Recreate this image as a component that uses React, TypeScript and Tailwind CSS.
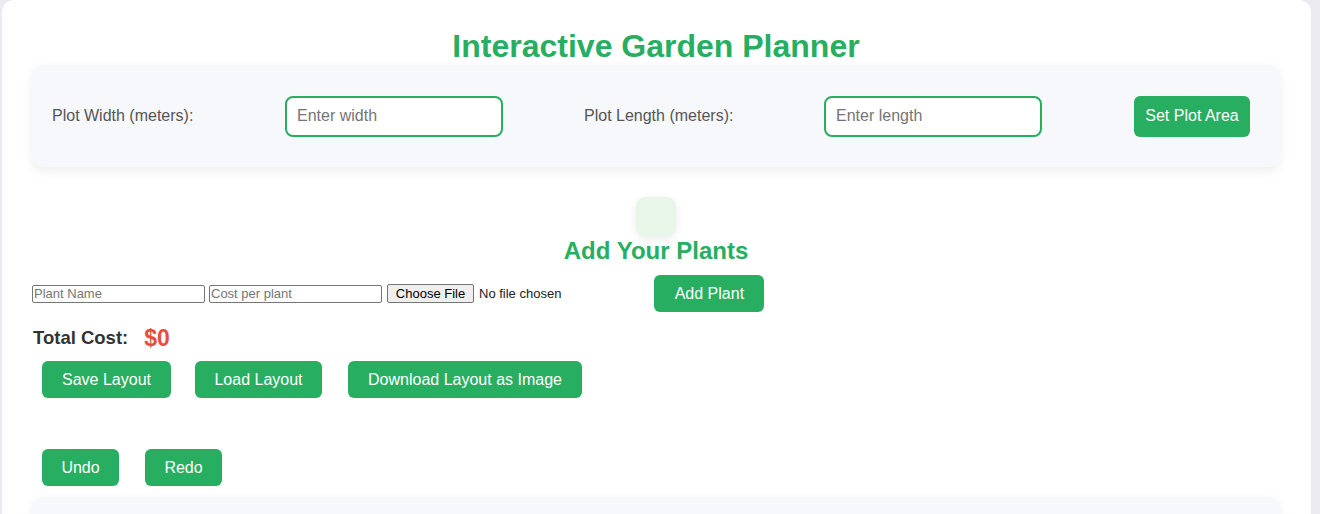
const font = { fontFamily: '"Liberation Sans", Arial, sans-serif' };

const GreenButton = ({ label, className = "" }: { label: string; className?: string }) => (
  <button
    className={`h-[37px] whitespace-nowrap rounded-[6px] bg-[#27ae60] text-center text-[16px] text-white ${className}`}
  >
    {label}
  </button>
);

export default function App() {
  return (
    <div className="min-h-[514px] overflow-hidden bg-[#ebeaf0]" style={font}>
      <div className="ml-[2px] min-h-[514px] w-[1309px] rounded-t-[12px] bg-white pl-[30px] pr-[31px]">
        <h1 className="pt-[28px] text-center text-[32px] font-bold leading-[37px] text-[#27ae60]">
          Interactive Garden Planner
        </h1>

        <div className="flex h-[102px] items-center rounded-[10px] bg-[#f7f8fc] pl-[20px] shadow-[0_4px_12px_rgba(0,0,0,0.07)]">
          <label className="w-[233px] text-[16px] text-[#555]">Plot Width (meters):</label>
          <input
            placeholder="Enter width"
            className="h-[41px] w-[218px] rounded-[8px] border-2 border-[#27ae60] bg-white px-[10px] text-[16px] outline-none placeholder:text-[#757575]"
          />
          <label className="ml-[81px] w-[240px] text-[16px] text-[#555]">Plot Length (meters):</label>
          <input
            placeholder="Enter length"
            className="h-[41px] w-[218px] rounded-[8px] border-2 border-[#27ae60] bg-white px-[10px] text-[16px] outline-none placeholder:text-[#757575]"
          />
          <button className="ml-[92px] h-[41px] w-[116px] rounded-[6px] bg-[#27ae60] text-[16px] text-white">
            Set Plot Area
          </button>
        </div>

        <div className="mx-auto mt-[30px] h-[40px] w-[40px] rounded-[10px] bg-[#e8f5e9] shadow-[0_2px_10px_rgba(0,0,0,0.08)]" />

        <h2 className="text-center text-[24px] font-bold leading-[28px] text-[#27ae60]">Add Your Plants</h2>

        <div className="mt-[10px] flex h-[37px] items-center">
          <input
            placeholder="Plant Name"
            className="h-[18px] w-[173px] rounded-[2px] border border-[#767676] px-[1px] text-[13px] placeholder:text-[#757575]"
          />
          <input
            placeholder="Cost per plant"
            className="ml-[4px] h-[18px] w-[173px] rounded-[2px] border border-[#767676] px-[1px] text-[13px] placeholder:text-[#757575]"
          />
          <button className="ml-[5px] h-[19px] w-[87px] rounded-[2px] border border-[#767676] bg-[#efefef] text-[13px] leading-none text-black">
            Choose File
          </button>
          <span className="ml-[5px] text-[13px] text-[#222]">No file chosen</span>
          <GreenButton label="Add Plant" className="ml-[93px] w-[110px]" />
        </div>

        <div className="mt-[12px] flex h-[28px] items-center pl-[1px]">
          <span className="text-[18.5px] font-bold text-[#333]">Total Cost:</span>
          <span className="ml-[16px] text-[23px] font-bold text-[#e74c3c]">$0</span>
        </div>

        <div className="mt-[9px] flex pl-[10px]">
          <GreenButton label="Save Layout" className="w-[129px]" />
          <GreenButton label="Load Layout" className="ml-[24px] w-[127px]" />
          <GreenButton label="Download Layout as Image" className="ml-[26px] w-[234px]" />
        </div>

        <div className="mt-[51px] flex pl-[10px]">
          <GreenButton label="Undo" className="w-[77px]" />
          <GreenButton label="Redo" className="ml-[26px] w-[77px]" />
        </div>

        <div className="mt-[11px] h-[40px] rounded-t-[10px] bg-[#f7f8fc] shadow-[0_4px_12px_rgba(0,0,0,0.07)]" />
      </div>
    </div>
  );
}
